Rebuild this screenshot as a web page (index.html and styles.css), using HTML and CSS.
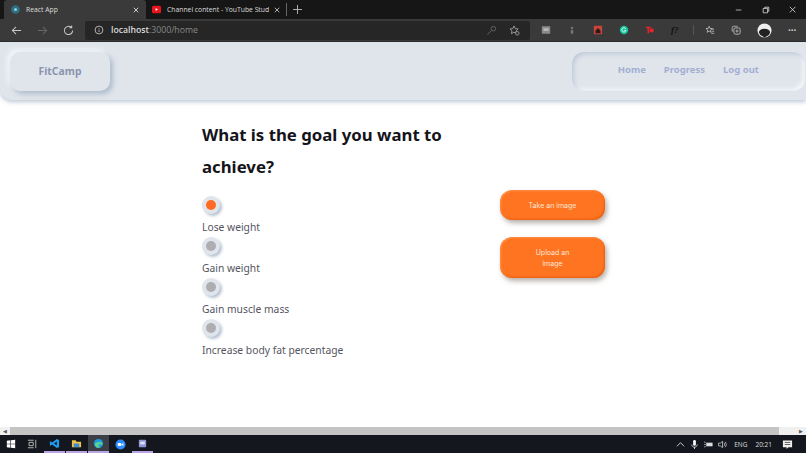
FILE: index.html
```html
<!DOCTYPE html>
<html lang="en">
<head>
  <meta charset="UTF-8">
  <title>React App</title>
  <link rel="stylesheet" href="styles.css">
</head>
<body>
<div id="window">
  <div id="tabbar">
    <div class="tab active">
      <svg class="fav" viewBox="0 0 12 12"><circle cx="6" cy="6" r="5.800" fill="#2f6f80"/><circle cx="6" cy="6" r="2" fill="#7fd4e8"/></svg>
      <span class="tab_title">React App</span>
      <svg class="tab_x" viewBox="0 0 8 8"><path d="M1 1l6 6M7 1l-6 6" stroke="#ddd" stroke-width="1.2"/></svg>
    </div>
    <div class="tab second">
      <svg class="fav" viewBox="0 0 12 12"><rect x="0" y="1" width="12" height="10" rx="2" fill="#e8141c"/><path d="M4.800 4v4l3.200-2z" fill="#fff"/></svg>
      <span class="tab_title dim">Channel content - YouTube Stud</span>
      <svg class="tab_x" viewBox="0 0 8 8"><path d="M1 1l6 6M7 1l-6 6" stroke="#ccc" stroke-width="1.1"/></svg>
    </div>
    <div class="tab_sep"></div>
    <svg class="new_tab" viewBox="0 0 10 10"><path d="M5 0v10M0 5h10" stroke="#bbb" stroke-width="1"/></svg>
    <div class="win_btns">
      <svg viewBox="0 0 10 10"><path d="M1 5h7" stroke="#ccc" stroke-width="1"/></svg>
      <svg viewBox="0 0 10 10"><path d="M1.500 3h5.500v5.500h-5.500zM3.500 3v-1.500h5v5h-1.500" fill="none" stroke="#ddd" stroke-width="1"/></svg>
      <svg viewBox="0 0 10 10"><path d="M1 1l7 7M8 1l-7 7" stroke="#ddd" stroke-width="1"/></svg>
    </div>
  </div>

  <div id="toolbar">
    <div class="nav_btns">
      <svg viewBox="0 0 12 12"><path d="M11 6H1.500M5.500 2L1.500 6l4 4" fill="none" stroke="#c8c8c8" stroke-width="1.100"/></svg>
      <svg viewBox="0 0 12 12"><path d="M1 6h9.500M6.500 2l4 4-4 4" fill="none" stroke="#666" stroke-width="1.100"/></svg>
      <svg viewBox="0 0 12 12"><path d="M10.500 6a4.500 4.500 0 1 1-1.400-3.300M9.500 .5v2.500H7" fill="none" stroke="#c8c8c8" stroke-width="1.100"/></svg>
    </div>
    <div class="address">
      <svg class="info" viewBox="0 0 12 12"><circle cx="6" cy="6" r="4.700" fill="none" stroke="#ccc"/><path d="M6 5.500v3M6 3.500v1" stroke="#ccc"/></svg>
      <span class="url"><b>localhost</b>:3000/home</span>
      <svg class="addr_icon key" viewBox="0 0 12 12"><circle cx="8" cy="4" r="2.500" fill="none" stroke="#666"/><path d="M6 6l-4.500 4.500" stroke="#666"/></svg>
      <svg class="addr_icon" viewBox="0 0 12 12"><path d="M5.500 1l1.400 3 3.100.3-2.300 2.100.7 3.100-2.900-1.700-2.900 1.700.7-3.100L1 4.300l3.100-.3z" fill="none" stroke="#aaa" stroke-width=".9"/><circle cx="9" cy="9" r="2" fill="#333" stroke="#aaa" stroke-width=".8"/></svg>
    </div>
    <div class="ext_btns">
      <svg viewBox="0 0 12 12"><rect x="1" y="1.500" width="10" height="9" fill="#8b8b8b"/><rect x="3" y="4" width="6" height="3" fill="#bbb"/></svg>
      <svg viewBox="0 0 12 12"><circle cx="6" cy="3.500" r="1.500" fill="#777"/><rect x="4.500" y="6" width="3" height="4.500" rx="1" fill="#777"/></svg>
      <svg viewBox="0 0 12 12"><rect x="1" y="1" width="10" height="10" rx="1" fill="#c9453a"/><path d="M3 7l3-3.500L9 7v3H3z" fill="#2a1a18"/></svg>
      <svg viewBox="0 0 12 12"><circle cx="6" cy="6" r="5" fill="#15c39a"/><path d="M8 4.500a2.500 2.500 0 1 0 .3 2H6.500" fill="none" stroke="#fff"/></svg>
      <svg viewBox="0 0 12 12"><path d="M1 2h6v2H5v6H3V4H1z" fill="#e8232a"/><circle cx="8" cy="6.500" r="2.500" fill="#e8232a"/></svg>
      <span class="ext_f">f?</span>
      <div class="ext_sep"></div>
      <svg viewBox="0 0 12 12"><path d="M5 1.500l1.100 2.600 2.700.2-2.100 1.800.7 2.700L5 7.300 2.600 8.800l.7-2.700L1.200 4.300l2.700-.2zM8 5h3M8.500 7.500H11M7.500 10H11" fill="none" stroke="#ccc" stroke-width=".9"/></svg>
      <svg viewBox="0 0 12 12"><rect x="3.500" y="3.500" width="7.500" height="7.500" rx="2" fill="none" stroke="#ccc"/><path d="M1.500 8V3a1.500 1.500 0 0 1 1.500-1.500h5M7.200 5.500v3.500M5.500 7.200H9" fill="none" stroke="#ccc" stroke-width=".9"/></svg>
      <svg class="avatar" viewBox="0 0 16 16"><circle cx="8" cy="8" r="7.500" fill="#eee"/><path d="M2 10a6 4 0 0 1 12 0 6 6 0 0 1-4 4.500L8 15.500 6 14a6 6 0 0 1-4-4z" fill="#222"/></svg>
      <span class="more">···</span>
    </div>
  </div>

  <div id="page">
    <div class="hscroll_area">
      <header class="navbar">
        <div class="logo">FitCamp</div>
        <nav class="links">
          <a href="#">Home</a>
          <a href="#">Progress</a>
          <a href="#">Log out</a>
        </nav>
      </header>

      <main class="content">
        <div class="goal">
          <h1>What is the goal you want to achieve?</h1>
          <div class="option"><span class="radio checked"></span><label>Lose weight</label></div>
          <div class="option"><span class="radio"></span><label>Gain weight</label></div>
          <div class="option"><span class="radio"></span><label>Gain muscle mass</label></div>
          <div class="option"><span class="radio"></span><label>Increase body fat percentage</label></div>
        </div>
        <div class="actions">
          <button class="btn">Take an image</button>
          <button class="btn tall">Upload an<br>image</button>
        </div>
      </main>
    </div>

    <div class="scrollbar">
      <span class="arrow">&#9664;</span>
      <div class="track"><div class="thumb"></div></div>
      <span class="arrow">&#9654;</span>
    </div>
  </div>

  <div id="taskbar">
    <svg class="start" viewBox="0 0 12 12"><path d="M1 2.200l4.300-.6v4H1zM6 1.500l5-.7v4.800H6zM1 6.400h4.300v4L1 9.800zM6 6.400h5v4.800l-5-.7z" fill="#fff"/></svg>
    <svg class="task_view" viewBox="0 0 12 12"><path d="M1 1.500h7M1 10.500h7M2.500 4h5v4h-5zM10.500 1v10" fill="none" stroke="#ccc"/></svg>
    <div class="task_app on"><svg viewBox="0 0 12 12"><path d="M8.500 1L11 2.200v7.600L8.500 11 3.500 7 1.500 8.500 1 8V4l.5-.5 2 1.500zM8.500 3.800L5.500 6l3 2.200z" fill="#1f9cf0"/></svg></div>
    <div class="task_app on"><svg viewBox="0 0 12 12"><path d="M1 2.500h4l1 1.500h5v6H1z" fill="#f0c14b"/><rect x="3" y="6" width="6" height="4" fill="#3a8fd0"/></svg></div>
    <div class="task_app on cur"><svg viewBox="0 0 12 12"><circle cx="6" cy="6" r="5" fill="#1b9de2"/><path d="M2 7c1-3 7-3.500 8.500-.5-.5 1-2 1-3.500 0-1.500 1-1 3 1 3.500C5 11.500 2.500 10 2 7z" fill="#5fd38d"/></svg></div>
    <div class="task_app"><svg viewBox="0 0 12 12"><circle cx="6" cy="6" r="5.500" fill="#2d8cff"/><rect x="3" y="4.300" width="4" height="3.400" rx=".8" fill="#fff"/><path d="M7.500 5.500L9.200 4.500v3L7.500 6.500z" fill="#fff"/></svg></div>
    <div class="task_app on"><svg viewBox="0 0 12 12"><rect x="2" y="2" width="8" height="8" rx="1" fill="#8f96d8"/><rect x="3.500" y="4" width="5" height="3" fill="#dfe2f5"/></svg></div>
    <div class="tray">
      <svg viewBox="0 0 10 10"><path d="M1 7l4-4 4 4" fill="none" stroke="#ddd"/></svg>
      <svg viewBox="0 0 10 10"><rect x="3.500" y="0" width="3" height="6.500" rx="1.500" fill="#fff"/><path d="M2 5c0 4 6 4 6 0M5 8v2" fill="none" stroke="#fff" stroke-width=".8"/></svg>
      <svg viewBox="0 0 10 10"><rect x="2.500" y="3" width="7" height="4" fill="#ddd"/><path d="M0 2l2 1M0 5h2M0 8l2-1" stroke="#ddd" stroke-width=".7"/></svg>
      <svg viewBox="0 0 10 10"><path d="M.5 3.500h2L5 1.500v7l-2.500-2h-2zM6.500 3c1 1 1 3 0 4M8 2c1.500 1.500 1.500 4.500 0 6" fill="none" stroke="#ddd" stroke-width=".8"/></svg>
      <span class="lang">ENG</span>
      <span class="clock">20:21</span>
      <svg class="notify" viewBox="0 0 12 12"><path d="M1 1.500h10v7.500H7l-2 2V9H1z" fill="#eee"/><path d="M3 3.800h6M3 6h6" stroke="#333" stroke-width=".8"/></svg>
    </div>
  </div>
</div>
</body>
</html>
```

FILE: styles.css
```css
* {
  margin: 0;
  padding: 0;
  box-sizing: border-box;
}

html, body {
  width: 100%;
  height: 100%;
  overflow: hidden;
}

body {
  font-family: "Noto Sans", "Liberation Sans", sans-serif;
  background: #fff;
}

#window {
  height: 453px;
  display: flex;
  flex-direction: column;
}

/* tabs */
#tabbar {
  height: 19px;
  background: #161616;
  display: flex;
  align-items: center;
  padding-left: 4px;
  flex: none;
}

.tab {
  height: 19px;
  width: 142px;
  display: flex;
  align-items: center;
  padding: 0 7px;
  font-family: "Open Sans", "Liberation Sans", sans-serif;
  font-size: 6.800px;
  color: #ddd;
}

.tab.second {
  width: 139px;
  padding: 0 5px 0 6px;
}

.tab.active {
  background: #3a3a3a;
  border-radius: 3px 3px 0 0;
}

.fav {
  width: 9px;
  height: 9px;
  margin-right: 6px;
  flex: none;
}

.tab_title {
  flex: 1;
  white-space: nowrap;
  overflow: hidden;
}

.tab_x {
  width: 6px;
  height: 6px;
  flex: none;
}

.tab_sep {
  width: 1px;
  height: 13px;
  background: #666;
  margin-left: 1px;
}

.new_tab {
  width: 9px;
  height: 9px;
  margin-left: 6px;
}

.win_btns {
  margin-left: auto;
  display: flex;
  gap: 19px;
  padding-right: 9px;
}

.win_btns svg {
  width: 8px;
  height: 8px;
}

/* address bar row */
#toolbar {
  height: 23px;
  background: #3a3a3a;
  display: flex;
  align-items: center;
  flex: none;
  border-bottom: 1px solid #2a2a2a;
}

.nav_btns {
  display: flex;
  gap: 15px;
  width: 85px;
  padding-left: 11px;
}

.nav_btns svg {
  width: 11px;
  height: 11px;
}

.address {
  width: 445px;
  height: 19px;
  background: #262626;
  border-radius: 2px;
  display: flex;
  align-items: center;
  padding: 0 10px 0 9px;
  font-family: "Open Sans", "Liberation Sans", sans-serif;
  font-size: 8.700px;
  color: #888;
}

.info {
  width: 10px;
  height: 10px;
  margin-right: 7px;
}

.url b {
  font-weight: 600;
  color: #ddd;
}

.addr_icon {
  width: 11px;
  height: 11px;
  margin-left: 12px;
}

.key {
  margin-left: auto;
}

.ext_btns {
  flex: 1;
  display: flex;
  align-items: center;
  padding-left: 11px;
  gap: 16px;
}

.ext_btns svg {
  width: 10px;
  height: 10px;
  flex: none;
}

.ext_btns .avatar {
  width: 15px;
  height: 15px;
}

.ext_f {
  font-family: "Liberation Serif", serif;
  font-style: italic;
  font-weight: bold;
  font-size: 9px;
  color: #111;
  width: 10px;
}

.ext_sep {
  width: 1px;
  height: 10px;
  background: #555;
  margin: 0 -5px 0 -4px;
}

.more {
  color: #ccc;
  font-size: 10px;
  font-weight: bold;
}

/* page */
#page {
  flex: 1;
  display: flex;
  flex-direction: column;
  min-height: 0;
}

.hscroll_area {
  flex: 1;
  min-height: 0;
  overflow: hidden;
}

.navbar {
  height: 58px;
  background: #e0e5ec;
  border-radius: 0 0 0 12px;
  box-shadow: 0 2px 4px rgba(163, 177, 198, .7);
  display: flex;
  justify-content: space-between;
  align-items: center;
  padding: 0 1px 0 10px;
}

.logo {
  width: 100px;
  height: 39px;
  background: #e0e5ec;
  border-radius: 10px;
  box-shadow: 3px 3px 5px rgba(163, 177, 198, .8), -3px -3px 5px rgba(255, 255, 255, .6);
  display: flex;
  align-items: center;
  justify-content: center;
  color: #8a94ae;
  font-size: 10.400px;
  font-weight: 700;
}

.links {
  width: 233px;
  height: 39px;
  border-radius: 12px;
  background: #e0e5ec;
  box-shadow: inset 2px 2px 4px rgba(163, 177, 198, .55), inset -2px -2px 4px rgba(255, 255, 255, .8);
  display: flex;
  align-items: center;
  justify-content: flex-end;
  gap: 18px;
  padding: 0 46px 3px 0;
}

.links a {
  color: #a3aed2;
  text-decoration: none;
  font-size: 9.500px;
  font-weight: 700;
}

.content {
  display: flex;
  padding: 19px 0 0 202px;
}

.goal {
  width: 298px;
}

h1 {
  width: 270px;
  font-size: 16.800px;
  font-weight: 700;
  line-height: 32px;
  color: #14141a;
  margin-bottom: 13px;
}

.option {
  display: flex;
  flex-direction: column;
  align-items: flex-start;
  margin-bottom: 1px;
}

.option label {
  font-size: 10.300px;
  line-height: 17px;
  color: #55555f;
  margin-top: 5px;
}

.radio {
  width: 18px;
  height: 18px;
  border-radius: 50%;
  background: #e0e5ec;
  box-shadow: 2px 2px 3px rgba(163, 177, 198, .8), -1px -1px 2px rgba(255, 255, 255, .7);
  display: flex;
  align-items: center;
  justify-content: center;
}

.radio::after {
  content: "";
  width: 10px;
  height: 10px;
  border-radius: 50%;
  background: #adadb2;
}

.radio.checked::after {
  background: #ff6b22;
}

.actions {
  display: flex;
  flex-direction: column;
  gap: 17px;
  padding-top: 71px;
}

.btn {
  width: 105px;
  height: 30px;
  border: 0;
  border-radius: 12px;
  background: #ff7420;
  box-shadow: 2px 3px 5px rgba(120, 110, 100, .55), inset -1px -1px 2px rgba(220, 80, 0, .6), inset 1px 1px 2px rgba(255, 170, 100, .6);
  color: #fbe6d8;
  font-family: "Inter", "Liberation Sans", sans-serif;
  font-size: 7px;
  line-height: 11px;
}

.btn.tall {
  height: 41px;
}

/* scrollbar */
.scrollbar {
  height: 8px;
  background: #f0f0f0;
  display: flex;
  align-items: center;
  flex: none;
}

.arrow {
  font-size: 5px;
  width: 10px;
  text-align: center;
  color: #555;
}

.track {
  flex: 1;
}

.thumb {
  width: 769px;
  height: 8px;
  background: #c4c4c4;
}

/* windows taskbar */
#taskbar {
  height: 18px;
  background: #14181e;
  display: flex;
  align-items: center;
  flex: none;
  padding-left: 6px;
}

.start {
  width: 10px;
  height: 10px;
  margin-right: 11px;
}

.task_view {
  width: 10px;
  height: 10px;
  margin-right: 7px;
}

.task_app {
  width: 21px;
  height: 18px;
  margin-right: 1px;
  display: flex;
  align-items: center;
  justify-content: center;
}

.task_app.on {
  border-bottom: 2px solid #b9a3e3;
}

.task_app.cur {
  background: #3c4046;
}

.task_app svg {
  width: 11px;
  height: 11px;
}

.tray {
  margin-left: auto;
  display: flex;
  align-items: center;
  gap: 5px;
  padding-right: 13px;
  font-family: "Open Sans", "Liberation Sans", sans-serif;
  font-size: 6.500px;
  color: #ddd;
}

.tray svg {
  width: 9px;
  height: 9px;
}

.lang {
  margin-left: 2px;
}

.clock {
  margin-left: 3px;
  margin-right: 5px;
}

.tray .notify {
  width: 11px;
  height: 11px;
}
```
